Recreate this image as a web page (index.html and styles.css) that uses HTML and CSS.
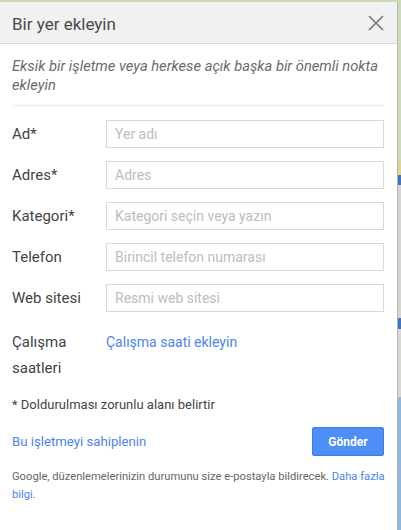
FILE: index.html
```html
<!DOCTYPE html>
<html lang="tr">
<head>
<meta charset="utf-8">
<title>Bir yer ekleyin</title>
<link rel="stylesheet" href="styles.css">
</head>
<body>
<div class="map">
  <div class="dialog">
    <div class="dialog-header">
      <span class="dialog-title">Bir yer ekleyin</span>
      <button class="close" aria-label="Kapat">
        <svg width="16" height="16" viewBox="0 0 16 16"><path d="M1 1L15 15M15 1L1 15" stroke="#777" stroke-width="1.6" fill="none"/></svg>
      </button>
    </div>
    <div class="dialog-body">
      <p class="intro">Eksik bir işletme veya herkese açık başka bir önemli nokta ekleyin</p>
      <div class="form">
        <label class="field-label">Ad*</label>
        <input class="field-input" placeholder="Yer adı">
        <label class="field-label">Adres*</label>
        <input class="field-input" placeholder="Adres">
        <label class="field-label">Kategori*</label>
        <input class="field-input" placeholder="Kategori seçin veya yazın">
        <label class="field-label">Telefon</label>
        <input class="field-input" placeholder="Birincil telefon numarası">
        <label class="field-label">Web sitesi</label>
        <input class="field-input" placeholder="Resmi web sitesi">
        <div class="field-label hours-label">Çalışma saatleri</div>
        <a class="link hours-link" href="#">Çalışma saati ekleyin</a>
      </div>
      <p class="required-note">* Doldurulması zorunlu alanı belirtir</p>
      <div class="actions">
        <a class="link claim" href="#">Bu işletmeyi sahiplenin</a>
        <button class="submit">Gönder</button>
      </div>
      <p class="footnote">Google, düzenlemelerinizin durumunu size e-postayla bildirecek. <a class="link" href="#">Daha fazla bilgi</a>.</p>
    </div>
  </div>
</div>
</body>
</html>
```
FILE: styles.css
```css
html, body {
  margin: 0;
  padding: 0;
  height: 100%;
}
body {
  font-family: Roboto, "Liberation Sans", Arial, sans-serif;
  overflow: hidden;
}
.map {
  height: 100%;
  box-sizing: border-box;
  padding: 2px 3px 0 0;
  background: linear-gradient(180deg, #c9dcb9 0%, #c9dcb9 30%, #e2d48c 31%, #e2d48c 33%, #3d74c4 33%, #3d74c4 35%, #d6d6d0 35%, #d6d6d0 60%, #3d74c4 60%, #3d74c4 62%, #d8d8d0 62%, #d8d8d0 75%, #8fb8dc 75%);
}
.dialog {
  width: 398px;
  height: 100%;
  background: #fff;
  border-right: 1px solid #b8b8b8;
  box-sizing: border-box;
  display: flex;
  flex-direction: column;
}
.dialog-header {
  height: 41px;
  background: #f1f1f1;
  border-bottom: 1px solid #d9d9d9;
  display: flex;
  align-items: center;
  justify-content: space-between;
  padding: 0 13px 0 12px;
}
.dialog-title {
  font-size: 17px;
  color: #4a4a4a;
  margin-top: 2px;
}
.close {
  border: 0;
  background: none;
  padding: 0;
  width: 16px;
  height: 16px;
  display: flex;
}
.dialog-body {
  padding: 0 13px 0 12px;
}
.intro {
  margin: 13px 0 0;
  padding-bottom: 10px;
  border-bottom: 1px solid #ececec;
  font-style: italic;
  font-size: 14.7px;
  line-height: 19px;
  color: #6b6b6b;
}
.form {
  display: grid;
  grid-template-columns: 94px 1fr;
  row-gap: 13px;
  align-items: center;
  margin-top: 14px;
}
.field-label {
  font-size: 15px;
  color: #444;
}
.field-input {
  height: 28px;
  box-sizing: border-box;
  border: 1px solid #d9d9d9;
  border-radius: 0;
  padding: 0 8px;
  font-family: inherit;
  font-size: 14px;
  color: #333;
  outline: none;
}
.field-input::placeholder {
  color: #bdbdbd;
}
.hours-label {
  align-self: start;
  width: 60px;
  line-height: 26px;
  margin-top: 4px;
}
.hours-link {
  align-self: start;
  line-height: 26px;
  margin-top: 4px;
  font-size: 14px;
}
.link {
  color: #4d84ee;
  text-decoration: none;
}
.required-note {
  margin: 16px 0 0;
  font-size: 13px;
  color: #444;
}
.actions {
  margin-top: 15px;
  display: flex;
  align-items: center;
  justify-content: space-between;
}
.claim {
  font-size: 13.2px;
}
.submit {
  width: 72px;
  height: 29px;
  border: 1px solid #3a7ee8;
  border-radius: 2px;
  background: #4d8ef7;
  color: #fff;
  font-family: inherit;
  font-weight: bold;
  font-size: 12px;
  padding: 0;
}
.footnote {
  margin: 12px -8px 0 0;
  font-size: 11.2px;
  line-height: 18px;
  color: #666;
}
```
